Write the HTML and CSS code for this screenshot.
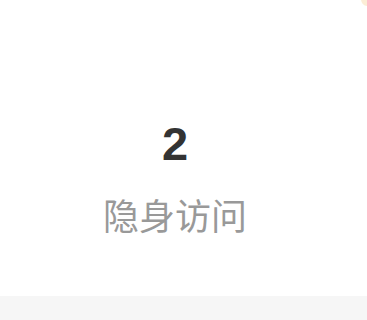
FILE: index.html
```html
<!DOCTYPE html>
<html lang="zh-CN">

<head>
    <meta charset="UTF-8">
    <meta name="viewport" content="width=device-width, initial-scale=1.0">
    <title>隐身访问</title>
    <link rel="stylesheet" href="styles.css">
</head>

<body>
    <div class="stat-panel">
        <span class="corner-dot"></span>
        <div class="stat-item">
            <span class="stat-value">2</span>
            <span class="stat-label">隐身访问</span>
        </div>
    </div>
    <div class="footer-band"></div>
</body>

</html>
```

FILE: styles.css
```css
body {
    margin: 0;
    font-family: "Liberation Sans", Arial, "Noto Sans CJK SC", sans-serif;
    background-color: #ffffff;
}

.stat-panel {
    position: relative;
    height: 296px;
    overflow: hidden;
}

.corner-dot {
    position: absolute;
    top: -8px;
    right: -6px;
    width: 12px;
    height: 14px;
    border-radius: 50%;
    background: #fcedd6;
}

.stat-item {
    width: 350px;
    padding-top: 122px;
    display: flex;
    flex-direction: column;
    align-items: center;
}

.stat-value {
    font-size: 47px;
    font-weight: bold;
    color: #333333;
    line-height: 44px;
}

.stat-label {
    margin-top: 28px;
    font-size: 36px;
    color: #999999;
    line-height: 40px;
    font-family: "Noto Sans CJK SC", sans-serif;
}

.footer-band {
    height: 24px;
    background-color: #f6f6f6;
}
```
